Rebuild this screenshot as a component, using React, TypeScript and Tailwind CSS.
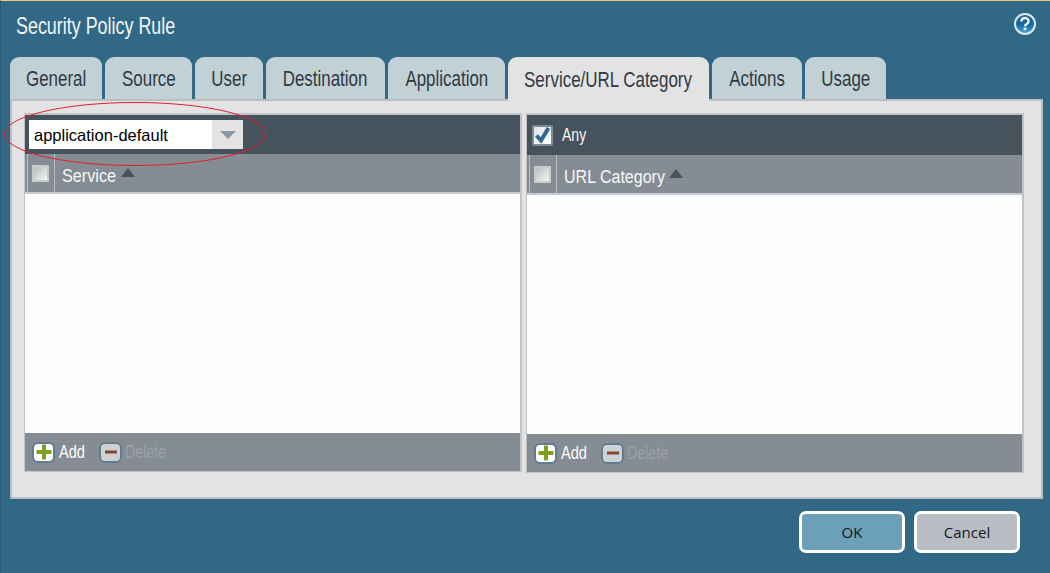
import React from "react";

const SANS = "font-['Liberation_Sans',sans-serif]";

function Tab({ label, width, active }: { label: string; width: string; active?: boolean }) {
  return (
    <div
      className={`${width} ${SANS} flex items-center justify-center rounded-t-[9px] pt-[1px] text-[22px] text-[#2f3a44] ${
        active ? "relative z-10 -mb-[2px] bg-[#e3e3e3]" : "bg-[#c2d1d5]"
      }`}
    >
      <span className="shrink-0 scale-x-[0.77] whitespace-nowrap">{label}</span>
    </div>
  );
}

function Check() {
  return <div className="size-[17px] border-2 border-[#c9cbc9] bg-gradient-to-br from-[#b8bcbf] to-[#f4f4f4]" />;
}

function Tri() {
  return <div className="mt-[-2px] h-0 w-0 border-x-[7.5px] border-b-[9px] border-x-transparent border-b-[#47535d]" />;
}

function IconBtn({ kind }: { kind: "add" | "del" }) {
  const add = kind === "add";
  return (
    <div
      className={`flex h-[21px] w-[23px] items-center justify-center rounded-[6px] border-[2px] border-[#5f7d90] ${
        add ? "bg-white" : "bg-[#cfd2d5]"
      }`}
    >
      <svg width="16" height="16" viewBox="0 0 16 16">
        {add ? (
          <path d="M6 .5h4v5.500h5.500v4H10v5.500H6V10H.5V6H6z" fill="#7f9f20" />
        ) : (
          <rect x="2" y="6.500" width="12" height="3" fill="#85472f" />
        )}
      </svg>
    </div>
  );
}

function Footer() {
  return (
    <div className={`${SANS} flex h-[38px] shrink-0 items-center bg-[#858c93] pl-[7px] text-[18px]`}>
      <IconBtn kind="add" />
      <span className="ml-[4px] w-[26px] origin-left scale-x-[0.81] whitespace-nowrap text-white">Add</span>
      <div className="ml-[14px]">
        <IconBtn kind="del" />
      </div>
      <span className="ml-[3px] w-[41px] origin-left scale-x-[0.79] whitespace-nowrap text-[#9aa0a6]">Delete</span>
    </div>
  );
}

function Column({ top, right }: { top: React.ReactNode; right?: boolean }) {
  return (
    <div
      className={`flex w-[498px] flex-col border-t-2 border-r-2 border-b-[1px] border-l-[1px] border-[#c1c3c9] ${
        right ? "h-[360px]" : "h-[359px]"
      }`}
    >
      <div className={`flex shrink-0 items-center bg-[#46525c] ${right ? "h-[40px] pl-[5px]" : "h-[39px] pl-[4px]"}`}>
        {top}
      </div>
      <div className="flex h-[40px] shrink-0 items-center border-b-2 border-[#c8cbcf] bg-[#858c93]">
        <div className="ml-[2px] flex h-full items-center border-x-[1px] border-[#b9bdc1] pl-[4px] pr-[5px] pt-[1px]">
          <Check />
        </div>
        {right ? (
          <>
            <span className={`${SANS} ml-[7px] w-[100px] origin-left scale-x-[0.89] whitespace-nowrap pt-[6px] text-[18px] text-[#f6f8f9]`}>
              URL Category
            </span>
            <div className="ml-[5px]">
              <Tri />
            </div>
          </>
        ) : (
          <>
            <span className={`${SANS} ml-[7px] w-[53px] origin-left scale-x-[0.9] whitespace-nowrap pt-[6px] text-[18px] text-[#f6f8f9]`}>
              Service
            </span>
            <div className="ml-[6px]">
              <Tri />
            </div>
          </>
        )}
      </div>
      <div className="flex-1 bg-[#fdfefe]" />
      <Footer />
    </div>
  );
}

export default function App() {
  return (
    <div className="relative h-[573px] w-[1050px] overflow-hidden border-l-[1px] border-t-[1px] border-l-[#2b5d79] border-t-[#e8c77e] bg-[#316886]">
      <div className="flex h-[56px] items-start justify-between pl-[15px] pr-[13px] pt-[9px]">
        <span className={`${SANS} w-[159px] origin-left scale-x-[0.746] whitespace-nowrap text-[24px] leading-[32px] text-[#f1f5f7]`}>
          Security Policy Rule
        </span>
        <svg className="mt-[2px]" width="24" height="24" viewBox="0 0 24 24">
          <defs>
            <linearGradient id="h" x1="0" y1="0" x2="0" y2="1">
              <stop offset="0%" stopColor="#0e5f94" />
              <stop offset="55%" stopColor="#156ba3" />
              <stop offset="100%" stopColor="#4fb0dd" />
            </linearGradient>
          </defs>
          <circle cx="12" cy="12" r="10" fill="url(#h)" stroke="#dbe9f1" strokeWidth="2" />
          <path d="M8.400 9.600c0-4.700 7.200-4.700 7.200-.1 0 2.500-3.600 2.400-3.600 4.700" fill="none" stroke="#f4f8fa" strokeWidth="2.400" />
          <rect x="10.700" y="15.500" width="2.600" height="2.600" fill="#f4f8fa" />
        </svg>
      </div>

      <div className="flex h-[42px] gap-[3px] pl-[9px]">
        <Tab label="General" width="w-[92px]" />
        <Tab label="Source" width="w-[87px]" />
        <Tab label="User" width="w-[68px]" />
        <Tab label="Destination" width="w-[119px]" />
        <Tab label="Application" width="w-[117px]" />
        <Tab label="Service/URL Category" width="w-[201px]" active />
        <Tab label="Actions" width="w-[90px]" />
        <Tab label="Usage" width="w-[81px]" />
      </div>

      <div className="ml-[9px] flex h-[400px] w-[1033px] gap-[4px] border-2 border-[#bcbfc0] bg-[#e3e3e3] pl-[12px] pt-[12px]">
        <Column
          top={
            <div className="flex h-[29px] w-[214px] bg-[#e3e3e3]">
              <div className={`${SANS} flex w-[183px] items-center bg-white pl-[5px] pt-[1px] text-[16.500px] text-black`}>
                application-default
              </div>
              <div className="flex flex-1 items-center justify-center">
                <div className="h-0 w-0 border-x-[8.500px] border-t-[8px] border-x-transparent border-t-[#8a98a3]" />
              </div>
            </div>
          }
        />
        <Column
          right
          top={
            <>
              <div className="flex size-[21px] items-center justify-center rounded-[2px] border-[2px] border-[#7f8a92] bg-gradient-to-br from-[#dfe3e5] to-white">
                <svg width="17" height="17" viewBox="0 0 17 17">
                  <path d="M2.500 8.500l4.500 5L14.500 1" fill="none" stroke="#2f6a8c" strokeWidth="4" />
                </svg>
              </div>
              <span className={`${SANS} ml-[9px] w-[24px] origin-left scale-x-[0.78] whitespace-nowrap text-[18px] text-[#f4f6f7]`}>
                Any
              </span>
            </>
          }
        />
      </div>

      <div className="mt-[12px] flex justify-end gap-[9px] pr-[30px] font-['Open_Sans',sans-serif] text-[15px] text-[#12171c]">
        <div className="flex h-[42px] w-[106px] items-center justify-center rounded-[7px] border-[3px] border-white bg-[#6ba0b8]">OK</div>
        <div className="flex h-[42px] w-[106px] items-center justify-center rounded-[7px] border-[3px] border-white bg-[#babdc5]">Cancel</div>
      </div>

      <div className="absolute left-[-1px] top-0 h-[70px] w-[1px] bg-[#e8c77e]" />
      <svg className="pointer-events-none absolute left-[3px] top-[101px]" width="264" height="64" viewBox="0 0 264 64">
        <ellipse cx="131" cy="32" rx="130.500" ry="31.500" fill="none" stroke="#e0202c" strokeWidth="1" />
      </svg>
    </div>
  );
}
